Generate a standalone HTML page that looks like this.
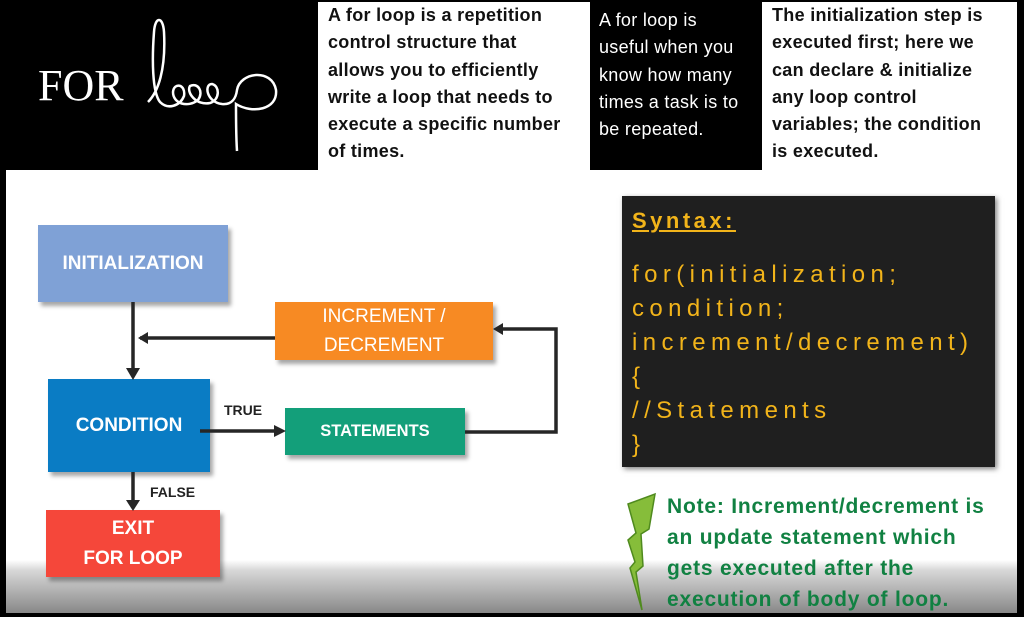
<!DOCTYPE html>
<html><head><meta charset="utf-8"><style>
*{margin:0;padding:0;box-sizing:border-box}
body{width:1024px;height:617px;background:#000;position:relative;overflow:hidden;font-family:"Liberation Sans",sans-serif}
.a{position:absolute}
.tb{font-weight:bold;font-size:18px;letter-spacing:0.3px;line-height:27.3px;color:#111;white-space:nowrap}
.bx{position:absolute;color:#fff;display:flex;align-items:center;justify-content:center;text-align:center;box-shadow:3px 4px 4px rgba(0,0,0,.35)}
.code{font-family:"Liberation Sans",sans-serif;color:#f2b41a;font-size:24px;letter-spacing:5.4px;line-height:34px;white-space:nowrap}
</style></head><body>
<div class="a" style="left:6px;top:170px;width:1011px;height:443px;background:linear-gradient(#fff 0,#fff 390px,#d8d8d8 400px,#888 443px)"></div>
<div class="a" style="left:6px;top:0;width:312px;height:170px;background:#000"></div>
<div class="a" style="left:38px;top:60px;color:#fff;font-family:'Liberation Serif',serif;font-size:44px">FOR</div>
<svg class="a" style="left:140px;top:10px" width="140" height="145" viewBox="0 0 140 145">
<path d="M8 92 C18 82 26 60 24 22 C23 6 15 6 14 22 C12 48 12 82 20 92 C28 100 40 96 44 86 C46 74 34 72 33 82 C33 94 48 98 58 90 C64 82 58 72 50 76 C46 82 56 96 70 93 C80 90 80 76 72 74 C64 74 66 92 82 94 C92 95 96 88 97 80 C100 62 132 58 136 80 C138 100 112 104 96 94 C96 112 96 126 97 141" fill="none" stroke="#fff" stroke-width="2.5"/>
</svg>
<div class="a tb" style="left:318px;top:2px;width:272px;height:168px;background:#fff;padding:0 0 0 10px">A for loop is a repetition<br>control structure that<br>allows you to efficiently<br>write a loop that needs to<br>execute a specific number<br>of times.</div>
<div class="a" style="left:590px;top:2px;width:172px;height:168px;background:#000;color:#fff;font-size:18px;letter-spacing:0.3px;line-height:27.3px;padding:5px 0 0 9px;white-space:nowrap">A for loop is<br>useful when you<br>know how many<br>times a task is to<br>be repeated.</div>
<div class="a tb" style="left:762px;top:2px;width:255px;height:168px;background:#fff;padding:0 0 0 10px">The initialization step is<br>executed first; here we<br>can declare &amp; initialize<br>any loop control<br>variables; the condition<br>is executed.</div>

<div class="bx" style="left:38px;top:225px;width:190px;height:77px;background:#7fa1d6;font-weight:bold;font-size:19px">INITIALIZATION</div>
<div class="bx" style="left:275px;top:302px;width:218px;height:58px;background:#f78a23;font-size:19px;line-height:29px">INCREMENT /<br>DECREMENT</div>
<div class="bx" style="left:48px;top:379px;width:162px;height:93px;background:#0a7cc4;font-weight:bold;font-size:19px">CONDITION</div>
<div class="bx" style="left:285px;top:408px;width:180px;height:47px;background:#139f7a;font-weight:bold;font-size:16.5px">STATEMENTS</div>
<div class="bx" style="left:46px;top:510px;width:174px;height:67px;background:#f5473a;font-weight:bold;font-size:19px;line-height:30px">EXIT<br>FOR LOOP</div>
<div class="a" style="left:224px;top:402px;font-weight:bold;font-size:14px;color:#222">TRUE</div>
<div class="a" style="left:150px;top:484px;font-weight:bold;font-size:14px;color:#222">FALSE</div>
<svg class="a" style="left:0;top:0" width="1024" height="617">
<g stroke="#262626" stroke-width="3.5" fill="none">
<path d="M133 302 V372"/><path d="M275 338 H140"/><path d="M200 431 H278"/><path d="M465 432 H556 V329 H500"/><path d="M133 472 V505"/>
</g>
<g fill="#262626">
<path d="M126 368 L140 368 L133 380Z"/><path d="M138 338 L148 332 L148 344Z"/><path d="M286 431 L274 425 L274 437Z"/><path d="M493 329 L503 323 L503 335Z"/><path d="M126 500 L140 500 L133 511Z"/>
</g>
<polygon points="628,504 655,494 649,529 641,534 643,566 636,572 642,610 630,568 635,562 628,540 636,533" fill="#86bd3a" stroke="#4f8a1e" stroke-width="1.5"/>
</svg>
<div class="a" style="left:622px;top:196px;width:373px;height:271px;background:#1f1f1f;box-shadow:2px 2px 5px rgba(0,0,0,.5);padding:9px 0 0 10px">
<div class="code" style="font-weight:bold;text-decoration:underline;font-size:22px;line-height:32px;letter-spacing:3.5px">Syntax:</div>
<div class="code" style="margin-top:21px">for(initialization;<br>condition;<br>increment/decrement)<br>{<br>//Statements<br>}</div>
</div>
<div class="a" style="left:667px;top:491px;width:350px;color:#118142;font-weight:bold;font-size:21px;letter-spacing:0.8px;line-height:31px;white-space:nowrap">Note: Increment/decrement is<br>an update statement which<br>gets executed after the<br>execution of body of loop.</div>
</body></html>
